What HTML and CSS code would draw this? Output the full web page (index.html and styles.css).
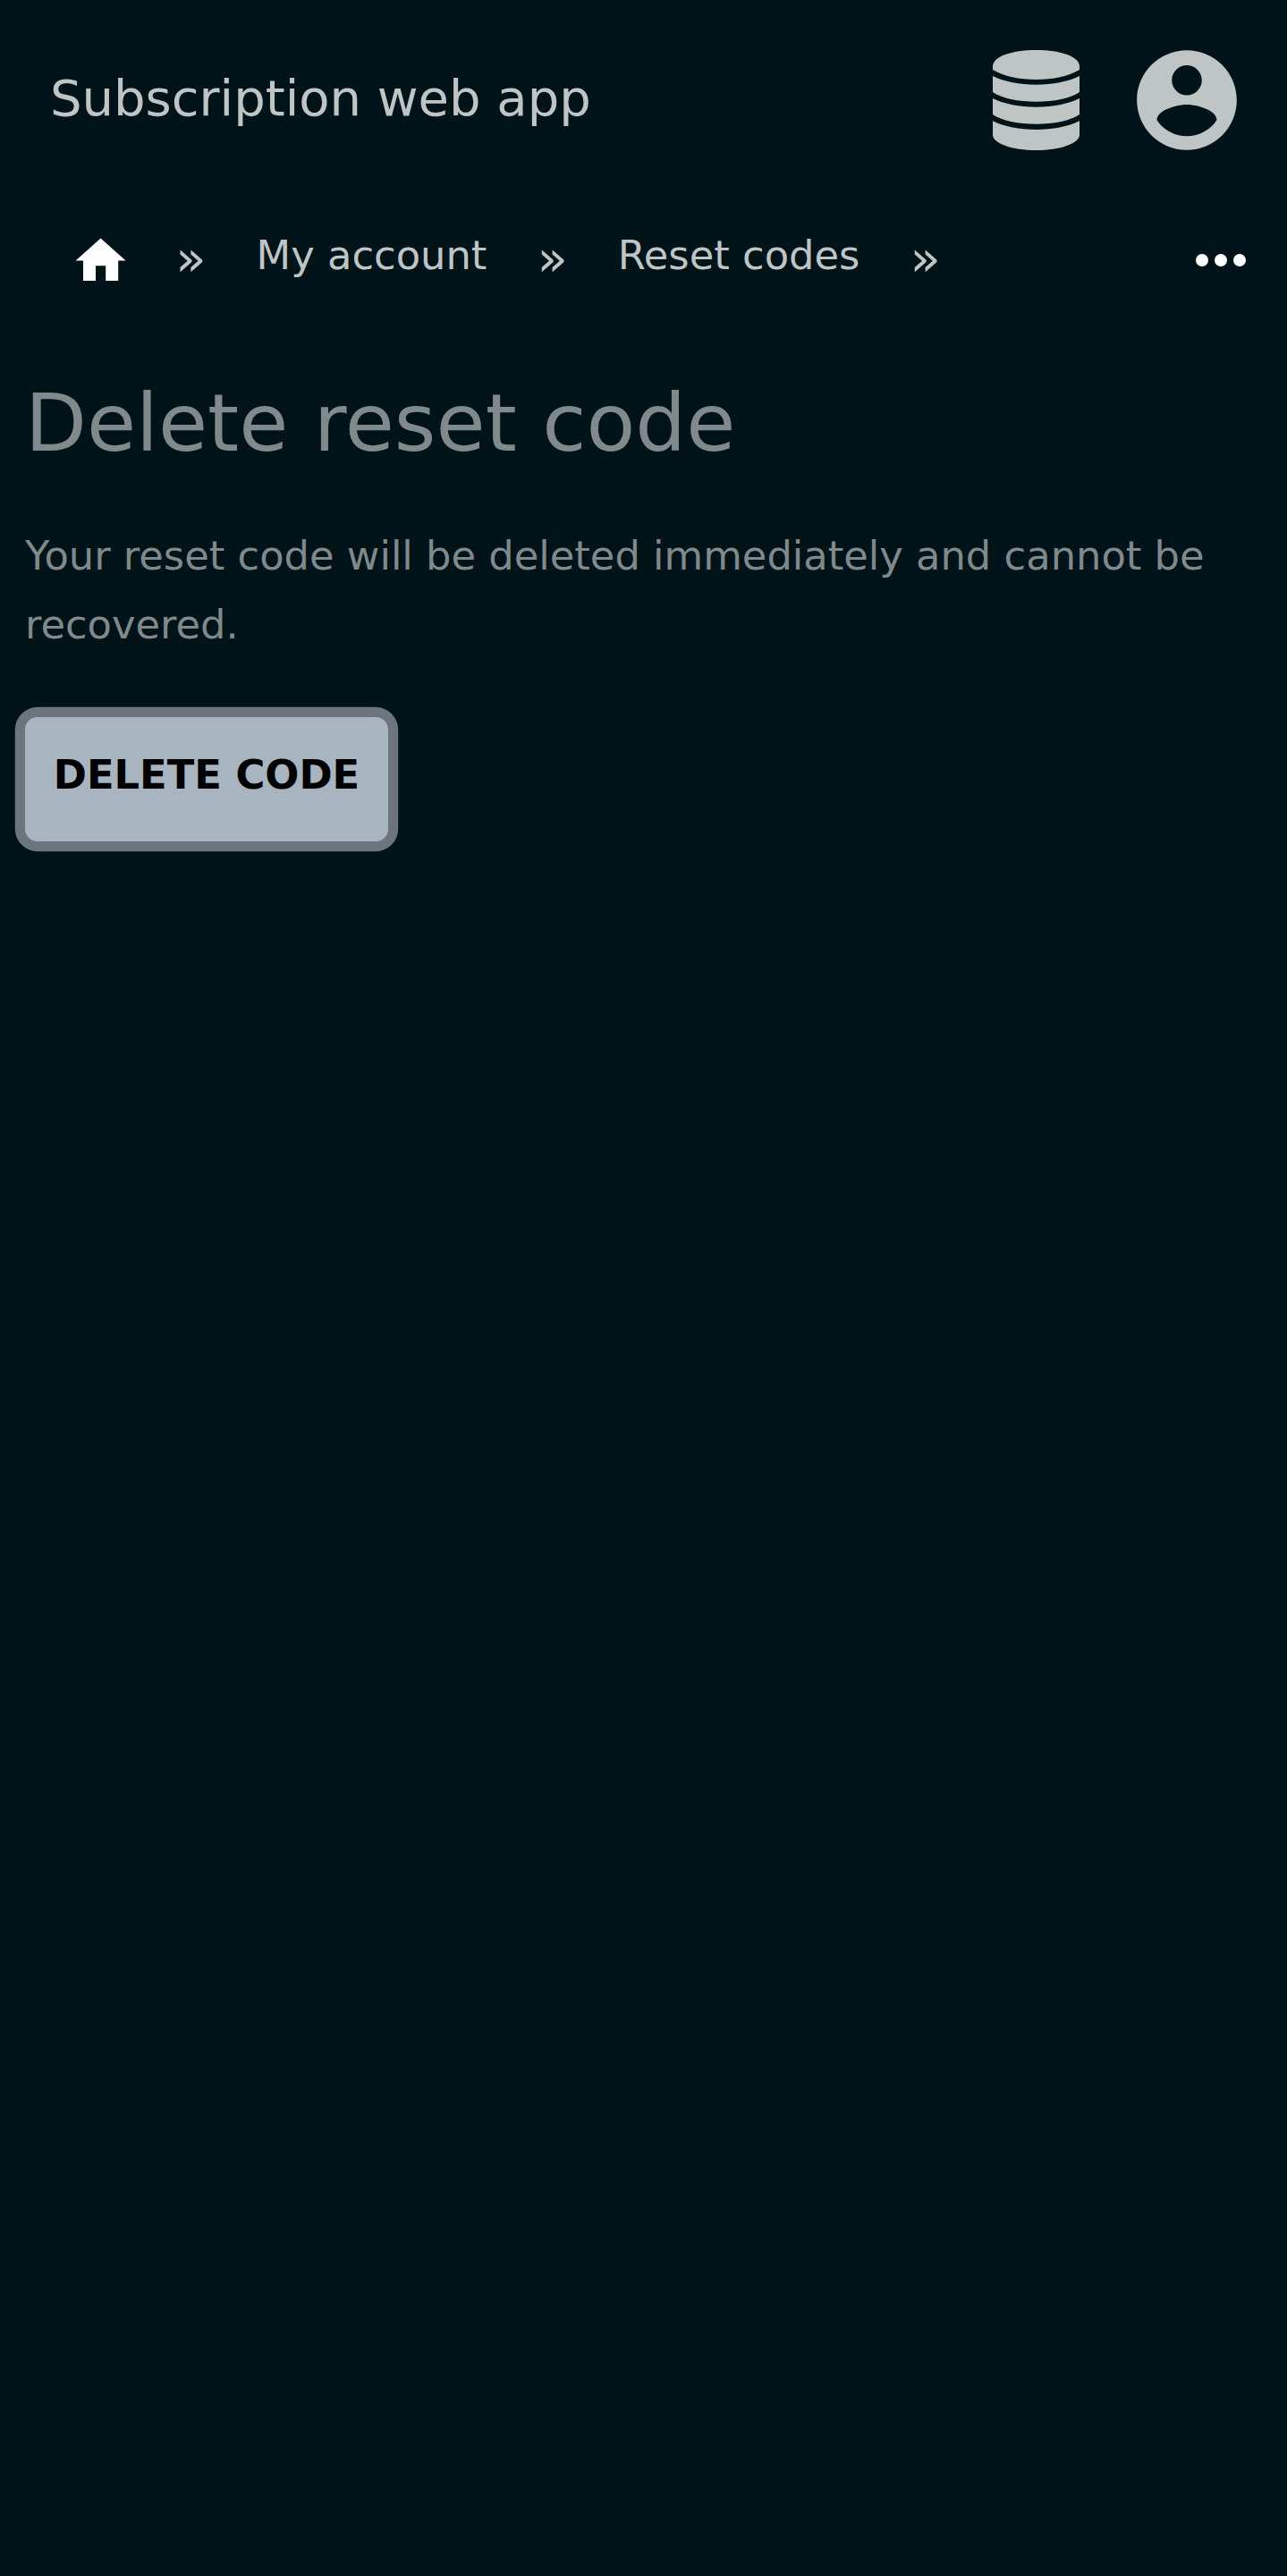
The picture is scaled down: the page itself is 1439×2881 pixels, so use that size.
FILE: index.html
```html
<!DOCTYPE html>
<html lang="en">
<head>
<meta charset="utf-8">
<title>Delete reset code</title>
<link rel="stylesheet" href="styles.css">
</head>
<body>
<header class="topbar">
  <span class="brand">Subscription web app</span>
  <svg class="icon-database" viewBox="0 0 291 336" preserveAspectRatio="none" aria-hidden="true">
    <path d="M0 55C0 22 62 0 145.500 0S291 22 291 55V66C255 88 202 99 145.500 99S36 88 0 66Z"/>
    <path d="M0 87C38 106 90 116 145.500 116S253 106 291 87V141C262 162 205 173 145.500 173S29 162 0 141Z"/>
    <path d="M0 162C38 181 90 191 145.500 191S253 181 291 162V216C262 237 205 248 145.500 248S29 237 0 216Z"/>
    <path d="M0 238C38 257 90 267 145.500 267S253 257 291 238V284C291 313 225 336 145.500 336S0 313 0 284Z"/>
  </svg>
  <svg class="icon-account" viewBox="0 0 24 24" aria-hidden="true">
    <path d="M12 2C6.480 2 2 6.480 2 12s4.480 10 10 10 10-4.480 10-10S17.520 2 12 2zm0 3c1.660 0 3 1.340 3 3s-1.340 3-3 3-3-1.340-3-3 1.340-3 3-3zm0 14.200c-2.500 0-4.710-1.280-6-3.220.03-1.990 4-3.080 6-3.080 1.990 0 5.970 1.090 6 3.080-1.290 1.940-3.500 3.220-6 3.220z"/>
  </svg>
</header>
<nav class="crumbs">
  <svg class="icon-home" viewBox="0 0 24 24" aria-hidden="true"><path d="M10 20v-6h4v6h5v-8h3L12 3 2 12h3v8z"/></svg>
  <span class="sep">»</span>
  <a class="crumb">My account</a>
  <span class="sep">»</span>
  <a class="crumb">Reset codes</a>
  <span class="sep">»</span>
  <svg class="icon-more" viewBox="0 0 24 24" aria-hidden="true"><circle cx="6" cy="12" r="2"/><circle cx="12" cy="12" r="2"/><circle cx="18" cy="12" r="2"/></svg>
</nav>
<main class="content">
  <h1 class="heading">Delete reset code</h1>
  <p class="message">Your reset code will be deleted immediately and cannot be recovered.</p>
  <button class="delete" type="button">DELETE CODE</button>
</main>
</body>
</html>
```
FILE: styles.css
```css
* { box-sizing: border-box; }

body {
  margin: 0;
  min-height: 2881px;
  background: #001318;
  color: #80898b;
  font-family: "DejaVu Sans", sans-serif;
  font-size: 44.8px;
}

svg { display: block; flex: none; }

.topbar {
  display: flex;
  align-items: center;
  height: 224px;
  padding: 0 45.400px 0 56px;
  color: #bfc4c5;
  fill: #bfc4c5;
}

.brand {
  margin-right: auto;
  font-size: 56px;
  line-height: 84px;
  padding-bottom: 4px;
}

.icon-database { width: 97px; height: 112px; margin-right: 52.600px; }
.icon-account { width: 134px; height: 134px; }

.crumbs {
  display: flex;
  align-items: center;
  gap: 56px;
  height: 136px;
  padding: 0 32px 0 78.700px;
  color: #bfc4c5;
  white-space: nowrap;
}

.icon-home { width: 67.200px; height: 67.200px; margin-right: -5.600px; fill: #fff; }
.icon-more { width: 84px; height: 84px; margin-left: auto; margin-bottom: 3px; fill: #fff; }
.sep { font-size: 56px; line-height: 84px; padding-bottom: 6px; }
.crumb { line-height: 78px; padding-bottom: 13px; }

.content { padding: 0 28px; }

.heading {
  margin: 0;
  padding-top: 58px;
  font-size: 89.600px;
  font-weight: 400;
  line-height: 110px;
}

.message {
  margin: 55px 0 0;
  line-height: 77px;
}

.delete {
  display: block;
  width: 406px;
  height: 139.700px;
  margin-top: 64.700px;
  padding: 0 0 10px;
  border: 0;
  border-radius: 14px;
  outline: 0;
  box-shadow: 0 0 0 11.200px #6c757e;
  background: #a9b4c1;
  color: #000;
  font: bold 44.800px/66px "DejaVu Sans", sans-serif;
}
```
